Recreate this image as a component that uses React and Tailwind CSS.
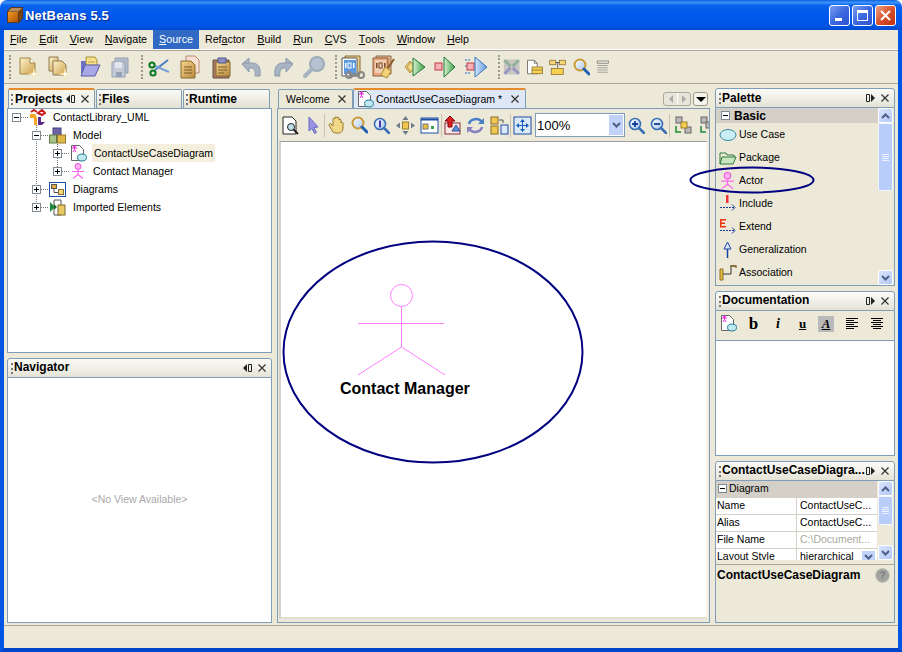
const blue = "border-[#7f9db9]";

const Svg = ({ s = 24, w, h, v, children }) => (
  <svg width={w || s} height={h || s} viewBox={v || `0 0 ${w || s} ${h || s}`} className="block shrink-0">{children}</svg>
);

function Defs() {
  return (
    <svg className="absolute w-0 h-0">
      <defs>
        <linearGradient id="gold" x1="0" y1="0" x2="1" y2="1"><stop offset="0" stopColor="#fdf3cf" /><stop offset="1" stopColor="#cf9f45" /></linearGradient>
        <linearGradient id="tan" x1="0" y1="0" x2="1" y2="1"><stop offset="0" stopColor="#f4d58e" /><stop offset="1" stopColor="#b98a3c" /></linearGradient>
        <linearGradient id="green" x1="0" y1="0" x2="1" y2="0"><stop offset="0" stopColor="#d6f0cf" /><stop offset="1" stopColor="#3e9e4a" /></linearGradient>
        <linearGradient id="bluetri" x1="0" y1="0" x2="1" y2="0"><stop offset="0" stopColor="#d5e6fa" /><stop offset="1" stopColor="#5f9ade" /></linearGradient>
        <linearGradient id="cube" x1="0" y1="0" x2="1" y2="1"><stop offset="0" stopColor="#f59b1d" /><stop offset="1" stopColor="#a84f08" /></linearGradient>
        <linearGradient id="lupe" x1="0" y1="0" x2="1" y2="1"><stop offset="0" stopColor="#ffffff" /><stop offset="1" stopColor="#a9c8ee" /></linearGradient>
      </defs>
    </svg>
  );
}

// toolbar icons
const Sparkle = ({ x, y }) => (
  <g transform={`translate(${x} ${y})`}>
    <path d="M0-6 1-1 6 0 1 1 0 6-1 1-6 0-1-1Z" fill="#fff" stroke="#f3dc8f" strokeWidth=".5" />
  </g>
);
const NewFile = () => <Svg><path d="M5 3h10l5 5v11H5Z" fill="url(#gold)" stroke="#a38443" /><path d="M15 3v5h5" fill="#fff" stroke="#a38443" /><Sparkle x={19} y={19} /></Svg>;
const NewProject = () => <Svg><path d="M3 2h9v14H3Z" fill="url(#gold)" stroke="#8f7a4e" /><path d="M7 6h9l4 4v10H7Z" fill="url(#gold)" stroke="#8f7a4e" /><Sparkle x={19} y={19} /></Svg>;
const OpenFolder = () => <Svg><path d="M4 6h5l1 2v10H4Z" fill="#6c71c4" /><path d="M9 2h9l2 3v11H9Z" fill="#f6e08c" stroke="#a98d3d" /><path d="M11 7h7M11 10h7" stroke="#c4a34c" /><path d="M4 21 8 10h15l-5 11Z" fill="#a9a8e6" stroke="#5b5aa8" /></Svg>;
const SaveAll = () => <Svg><path d="M7 3h13v15H7Z" fill="#b4bccb" stroke="#94a0b3" /><path d="M4 7h13v15H4Z" fill="#c4cad6" stroke="#94a0b3" /><path d="M7 7h7v6H7Z" fill="#e3e6ec" /><path d="M8 17h6v5H8Z" fill="#94a0b3" /></Svg>;
const Cut = () => <Svg><path d="M8 15 21 5" stroke="#4a7fc4" strokeWidth="2" /><path d="M8 11 22 17" stroke="#7aa3d8" strokeWidth="2" /><circle cx="5" cy="10" r="2.6" fill="none" stroke="#0c7a22" strokeWidth="2" /><circle cx="6" cy="18" r="2.6" fill="none" stroke="#0c7a22" strokeWidth="2" /></Svg>;
const Copy = () => <Svg><path d="M8 1h9l4 4v13H8Z" fill="#f9dfd0" stroke="#b58d76" /><path d="M3 6h10l4 4v13H3Z" fill="url(#tan)" stroke="#8a6a2d" /><path d="M6 12h8M6 15h8M6 18h8" stroke="#7a5c24" /></Svg>;
const Paste = () => <Svg><path d="M4 5h16v18H4Z" fill="#a97d6a" stroke="#6d4a3c" /><path d="M7 7h14v14H7Z" fill="url(#tan)" stroke="#8a6a2d" /><path d="M9 3h8v5H9Z" fill="#8c8fc5" stroke="#55578f" /><path d="M9 12h9M9 15h9M9 18h6" stroke="#7a5c24" /></Svg>;
const Undo = () => <Svg><path d="M3 8h9c6 0 9 4 8 13h-5c1-5-1-8-4-8H9v4L2 9l7-6v5" fill="#a8b4c4" stroke="#8f9bab" /></Svg>;
const Redo = () => <Svg><path d="M21 8h-9c-6 0-9 4-8 13h5c-1-5 1-8 4-8h2v4l7-8-7-6v5" fill="#a8b4c4" stroke="#8f9bab" /></Svg>;
const GrayLupe = () => <Svg><circle cx="15" cy="9" r="7" fill="#b7c2d0" stroke="#9fabb9" strokeWidth="2" /><path d="M10 14 3 21" stroke="#a7b2c0" strokeWidth="4" strokeLinecap="round" /></Svg>;
const Ones = ({ x, y, c }) => <g fill={c}><rect x={x} y={y} width="1.5" height="5" /><rect x={x + 3} y={y} width="3" height="5" fill="none" stroke={c} strokeWidth="1" /><rect x={x + 8} y={y} width="1.5" height="5" /></g>;
const Build = () => <Svg s={26}><path d="M5 2h15v18H5Z" fill="#e8cf94" stroke="#8a6a2d" /><path d="M2 4h15v18H2Z" fill="#fff" stroke="#555" /><rect x="4" y="6" width="12" height="14" fill="#5b9ae0" /><Ones x={5} y={9} c="#fff" /><path d="M9 21h11" stroke="#888" strokeWidth="3" /><circle cx="9" cy="21" r="3" fill="none" stroke="#888" strokeWidth="2" /><circle cx="21" cy="21" r="3" fill="none" stroke="#888" strokeWidth="2" /></Svg>;
const Clean = () => <Svg s={26}><path d="M5 2h15v18H5Z" fill="#e6b48d" stroke="#8a6a4d" /><path d="M2 4h15v18H2Z" fill="#e9a87e" stroke="#8b5a3a" /><rect x="4" y="6" width="11" height="13" fill="#eecdb3" /><Ones x={5} y={9} c="#7a4a2a" /><path d="M23 5 17 14" stroke="#8a5a2a" strokeWidth="2" /><path d="M14 13 20 17 16 24 10 21Z" fill="#f3d37a" stroke="#b08a35" /></Svg>;
const RunMain = () => <Svg><path d="M7 6 2 12 7 18 12 12Z" fill="#f4dc8d" stroke="#b48f3c" /><path d="M10 3 22 12 10 21Z" fill="url(#green)" stroke="#1f7a34" /><path d="M8 7 4 12 8 17" fill="none" stroke="#b48f3c" /></Svg>;
const DebugMain = () => <Svg><rect x="1" y="8" width="7" height="7" fill="#f7b0b5" stroke="#c03a46" /><path d="M10 2 21 12 10 22Z" fill="url(#green)" stroke="#1f7a34" /></Svg>;
const Profile = () => <Svg><path d="M0 5h6M0 11h2M0 18h6" stroke="#2b6cc8" strokeDasharray="2 1" /><rect x="2" y="8" width="7" height="7" fill="#f7b0b5" stroke="#c03a46" /><path d="M10 2 22 12 10 22Z" fill="url(#bluetri)" stroke="#3a75c0" /></Svg>;
const GrayArrows = () => <Svg s={18} v="0 0 24 24"><rect x="1" y="2" width="21" height="20" fill="#c8c6c0" /><path d="M2 3l8 8M21 3l-8 8" stroke="#8fb09a" strokeWidth="4" /><path d="M2 21l8-8M21 21l-8-8" stroke="#9a97c6" strokeWidth="4" /></Svg>;
const DocDb = () => <Svg s={18} v="0 0 24 24"><path d="M2 3h9l4 4v14H2Z" fill="#fff" stroke="#555" /><path d="M11 3v4h4" fill="none" stroke="#555" /><rect x="8" y="12" width="14" height="9" fill="#f5cf4d" stroke="#8a6a2d" /><path d="M8 16h14" stroke="#8a6a2d" /></Svg>;
const TreeDb = () => <Svg s={18} v="0 0 24 24"><rect x="1" y="3" width="8" height="6" fill="#f5d875" stroke="#8a6a2d" /><rect x="14" y="3" width="8" height="6" fill="#f5d875" stroke="#8a6a2d" /><path d="M9 6h5M11.500 6v7" stroke="#333" /><rect x="3" y="14" width="16" height="8" fill="#f5cf4d" stroke="#8a6a2d" /></Svg>;
const Lupe = ({ inner, c = "#3b6fb5" }) => <Svg s={17}><circle cx="7" cy="7" r="5.5" fill="url(#lupe)" stroke={c} strokeWidth="1.6" />{inner}<path d="M11 11 16 16" stroke={c} strokeWidth="2.6" strokeLinecap="round" /></Svg>;
const FindIcon = () => <Svg s={18}><circle cx="8" cy="7" r="5.500" fill="url(#lupe)" stroke="#c99a35" strokeWidth="2" /><path d="M12 11 17 16" stroke="#1f5fae" strokeWidth="3" strokeLinecap="round" /></Svg>;
const GrayList = () => <Svg s={18} v="0 0 24 24"><rect x="3" y="4" width="15" height="3" fill="none" stroke="#777" /><path d="M3 10h14M3 13h14M3 16h14M3 19h14" stroke="#a5a5a0" strokeWidth="1.5" /></Svg>;

function Grip() {
  return <div className="w-[2px] h-[24px] shrink-0 border-l-2 border-dotted border-[#9a9a90]" />;
}
function Btn({ w = "w-[31px]", children }) {
  return <div className={`${w} shrink-0 flex items-center justify-center`}>{children}</div>;
}

function TitleBtn({ red, children }) {
  return (
    <div className={`w-[21px] h-[21px] rounded-[3px] border border-white flex items-center justify-center ${red ? "bg-[linear-gradient(135deg,#e9a48a,#d9532c_50%,#b92d10)]" : "bg-[linear-gradient(135deg,#7b9ef0,#3c69e2_50%,#2c52cf)]"}`}>
      {children}
    </div>
  );
}

function TitleBar() {
  return (
    <div className="h-[30px] shrink-0 rounded-t-[7px] flex items-center pl-[6px] pr-[6px] bg-[linear-gradient(180deg,#0a5fe0_0%,#3d94f7_8%,#0a62ee_18%,#0058ee_50%,#0055e5_85%,#0049cf_100%)]">
      <svg width="18" height="18" viewBox="0 0 18 18" className="shrink-0">
        <path d="M1 5 5 1h12v11l-4 5H1Z" fill="#5c3a1a" />
        <path d="M2 6h10v10H2Z" fill="url(#cube)" />
        <path d="M2 5.500 5.500 2H16l-3.500 3.500Z" fill="#b98a5a" />
        <path d="M13 6l3-3v9l-3 3Z" fill="#7a4410" />
      </svg>
      <span className="ml-[1px] text-white font-bold text-[13px] tracking-[0.2px] [text-shadow:1px_1px_1px_#0a2a8a]">NetBeans 5.5</span>
      <div className="ml-auto flex gap-[2px]">
        <TitleBtn><div className="w-[7px] h-[3px] bg-white mt-[8px] mr-[3px]" /></TitleBtn>
        <TitleBtn><div className="w-[11px] h-[11px] border border-white border-t-[3px]" /></TitleBtn>
        <TitleBtn red><svg width="11" height="11" viewBox="0 0 11 11"><path d="M1 1l9 9M10 1l-9 9" stroke="#fff" strokeWidth="2" /></svg></TitleBtn>
      </div>
    </div>
  );
}

const menus = [
  ["", "F", "ile"], ["", "E", "dit"], ["", "V", "iew"], ["", "N", "avigate"], ["", "S", "ource"], ["Ref", "a", "ctor"],
  ["", "B", "uild"], ["", "R", "un"], ["", "C", "VS"], ["", "T", "ools"], ["", "W", "indow"], ["", "H", "elp"],
];

function MenuBar() {
  return (
    <div className="h-[21px] shrink-0 flex text-[10.7px] border-b border-[#aca899] shadow-[inset_0_-1px_0_#fff] pb-[2px]">
      {menus.map(([a, u, b], i) => (
        <div key={i} className={`h-[19px] px-[6px] flex items-center ${b === "ource" ? "bg-[#316ac5] text-white" : ""}`}>
          {a}<span className="underline">{u}</span>{b}
        </div>
      ))}
    </div>
  );
}

function Toolbar() {
  return (
    <div className="h-[33px] shrink-0 flex items-center pl-[5px] border-b border-[#aca899] pb-[1px]">
      <Grip />
      <Btn><NewFile /></Btn><Btn><NewProject /></Btn><Btn><OpenFolder /></Btn><Btn><SaveAll /></Btn>
      <div className="w-[6px]" /><Grip />
      <Btn><Cut /></Btn><Btn><Copy /></Btn><Btn><Paste /></Btn><Btn><Undo /></Btn><Btn><Redo /></Btn><Btn><GrayLupe /></Btn>
      <div className="w-[6px]" /><Grip />
      <Btn><Build /></Btn><Btn><Clean /></Btn><Btn><RunMain /></Btn><Btn><DebugMain /></Btn><Btn><Profile /></Btn>
      <div className="w-[6px]" /><Grip />
      <Btn w="w-[23px]"><GrayArrows /></Btn><Btn w="w-[23px]"><DocDb /></Btn><Btn w="w-[23px]"><TreeDb /></Btn><Btn w="w-[23px]"><FindIcon /></Btn><Btn w="w-[23px]"><GrayList /></Btn>
    </div>
  );
}

const Close = () => <svg width="8" height="8" viewBox="0 0 8 8" className="shrink-0"><path d="M.5.500l7 7M7.500.500l-7 7" stroke="#333" strokeWidth="1.200" /></svg>;
const PinL = () => <svg width="10" height="8" viewBox="0 0 10 8" className="shrink-0"><path d="M4 0v8L0 4Z" fill="#222" /><path d="M5.500.500h3v7h-3Z" fill="none" stroke="#222" /></svg>;
const PinR = () => <svg width="10" height="8" viewBox="0 0 10 8" className="shrink-0"><path d="M.5.500h3v7h-3Z" fill="none" stroke="#222" /><path d="M5 0v8l4-4Z" fill="#222" /></svg>;
const Dots = () => <div className="w-[2px] h-[11px] shrink-0 border-l-2 border-dotted border-[#777]" />;

function ViewHeader({ title, pin = <PinL />, pb = "pb-[2px]" }) {
  return (
    <div className={`h-[20px] shrink-0 flex items-center pl-[3px] pr-[5px] border rounded-t-[3px] ${blue} bg-[linear-gradient(180deg,#fbfaf6,#ecebe2_70%,#e4e2d4)]`}>
      <Dots />
      <span className={`ml-[1px] ${pb} font-bold text-[12px] truncate flex-1`}>{title}</span>
      <div className="flex items-center gap-[5px]">{pin}<Close /></div>
    </div>
  );
}

function Expander({ open }) {
  return (
    <svg width="9" height="9" viewBox="0 0 9 9" className="shrink-0 relative">
      <rect x=".5" y=".5" width="8" height="8" fill="#fff" stroke="#7f8a94" />
      <path d={open ? "M2 4.500h5" : "M2 4.500h5M4.500 2v5"} stroke="#000" />
    </svg>
  );
}

const ActorSmall = ({ s = 16 }) => (
  <svg width={s} height={s} viewBox="0 0 16 16" className="shrink-0">
    <circle cx="8" cy="3.500" r="3" fill="#ffb3f5" stroke="#f050e0" />
    <path d="M8 6.500v5M2 8.500h12M8 11.500 3 15.500M8 11.500l5 4" stroke="#ff66f0" strokeWidth="1.200" fill="none" />
  </svg>
);
const DiagramIcon = () => (
  <svg width="17" height="17" viewBox="0 0 17 17" className="shrink-0">
    <path d="M1.500.500h8l4 4v11h-12Z" fill="#fff" stroke="#666" />
    <path d="M4.500 1.500v3M2 3h5M4.500 4.500 3 7M4.500 4.500 6 7" stroke="#ee22dd" />
    <circle cx="4.500" cy="1.800" r="1.200" fill="#ee22dd" />
    <ellipse cx="12" cy="12.500" rx="4.500" ry="3.500" fill="#bfe8f0" stroke="#2a7f9a" />
  </svg>
);
const ModelRoot = () => (
  <svg width="17" height="17" viewBox="0 0 17 17" className="shrink-0">
    <path d="M1 5h5l2 4v7H5V9H1Z" fill="#f5a623" />
    <path d="M9 4l4-3 3 3-3 2Z" fill="none" stroke="#c81e1e" strokeWidth="2" />
    <path d="M9 8v8h4l3-3H12V8Z" fill="#5b2a86" />
    <path d="M2 3l3-2 3 2" fill="none" stroke="#c81e1e" strokeWidth="2" />
  </svg>
);
const ModelIcon = () => (
  <svg width="17" height="17" viewBox="0 0 17 17" className="shrink-0">
    <rect x="4" y="1" width="8" height="8" fill="#6d62a8" stroke="#46407a" />
    <rect x="0.500" y="8" width="7" height="8" fill="#a8c48a" stroke="#5f7a48" />
    <rect x="8.500" y="8" width="8" height="8" fill="#e0b848" stroke="#94782a" />
  </svg>
);
const DiagramsIcon = () => (
  <svg width="17" height="17" viewBox="0 0 17 17" className="shrink-0">
    <rect x=".5" y="1.500" width="16" height="14" fill="#fff" stroke="#1c4fa5" />
    <rect x="2.500" y="3.500" width="5" height="4" fill="#e8a838" stroke="#555" />
    <rect x="9.500" y="8.500" width="5" height="5" fill="#f3d977" stroke="#8a6a2d" />
    <path d="M5 7.500v4h4" stroke="#555" fill="none" />
  </svg>
);
const ImportedIcon = () => (
  <svg width="17" height="17" viewBox="0 0 17 17" className="shrink-0">
    <path d="M5 1h7v15H5Z" fill="#fff" stroke="#555" />
    <path d="M1 3l5 5-5 5Z" fill="#1c8a3a" />
    <path d="M5 5l3 3-3 3Z" fill="#166a2c" />
    <rect x="9" y="6" width="7" height="10" fill="#e8c860" stroke="#7a6a2a" />
  </svg>
);

function TreeRow({ depth, open, icon, label, selected }) {
  const indent = ["pl-[4px]", "pl-[24px]", "pl-[45px]"][depth];
  return (
    <div className={`h-[18px] flex items-center ${indent}`}>
      <Expander open={open} />
      <div className="w-[7px] border-t border-dotted border-[#777] mr-[1px]" />
      {icon}
      <span className={`ml-[5px] px-[2px] h-[18px] flex items-center ${selected ? "bg-[#f3efdc]" : ""}`}>{label}</span>
    </div>
  );
}

function ProjectsPanel() {
  return (
    <div className="h-[265px] shrink-0 flex flex-col">
      <div className="h-[20px] shrink-0 flex items-end pl-[1px] gap-[1px]">
        <div className={`w-[87px] h-[20px] flex items-center pl-[2px] pr-[5px] rounded-t-[2px] border-x border-t-2 border-t-[#e68b2c] ${blue} bg-[#f4f3ec]`}>
          <Dots /><span className="ml-[2px] font-bold text-[12px] flex-1">Projects</span><div className="flex items-center gap-[5px]"><PinL /><Close /></div>
        </div>
        <div className={`w-[86px] h-[19px] flex items-center pl-[2px] rounded-t-[2px] border-x border-t ${blue} bg-[linear-gradient(180deg,#fbfaf6,#e2e0d2)]`}><Dots /><span className="ml-[1px] font-bold text-[12px]">Files</span></div>
        <div className={`w-[87px] h-[19px] flex items-center pl-[2px] rounded-t-[2px] border-x border-t ${blue} bg-[linear-gradient(180deg,#fbfaf6,#e2e0d2)]`}><Dots /><span className="ml-[1px] font-bold text-[12px]">Runtime</span></div>
      </div>
      <div className={`relative flex-1 bg-white border ${blue}`}>
        <svg className="absolute left-0 top-0" width="60" height="110">
          <path d="M28.500 14V99M49.500 33V63" stroke="#777" strokeDasharray="1 1" fill="none" />
        </svg>
        <div className="relative mt-[-1px]">
          <TreeRow depth={0} open icon={<ModelRoot />} label="ContactLibrary_UML" />
          <TreeRow depth={1} open icon={<ModelIcon />} label="Model" />
          <TreeRow depth={2} icon={<DiagramIcon />} label="ContactUseCaseDiagram" selected />
          <TreeRow depth={2} icon={<ActorSmall />} label="Contact Manager" />
          <TreeRow depth={1} icon={<DiagramsIcon />} label="Diagrams" />
          <TreeRow depth={1} icon={<ImportedIcon />} label="Imported Elements" />
        </div>
      </div>
    </div>
  );
}

function NavigatorPanel() {
  return (
    <div className="flex-1 flex flex-col min-h-0">
      <ViewHeader title="Navigator" />
      <div className={`flex-1 bg-white border border-t-0 pb-[2px] ${blue} flex items-center justify-center text-[#a9a9a9]`}>
        &lt;No View Available&gt;
      </div>
    </div>
  );
}

// diagram toolbar icons
const PageLupe = () => <Svg s={19}><path d="M2 1h9l4 4v13H2Z" fill="#fff" stroke="#222" /><circle cx="10" cy="11" r="3.500" fill="#bfe0ea" stroke="#222" /><path d="M12.500 13.500 17 18" stroke="#222" strokeWidth="2" /></Svg>;
const Pointer = () => <Svg s={18}><path d="M5 1l9 10-4 .5 2.500 5-2 1-2.500-5L5 15Z" fill="#9a96e6" stroke="#6a66c0" /></Svg>;
const Hand = () => <Svg s={20}><path d="M6 17 2 10c0-1 1-2 2-1l2 2V4c0-1 2-1 2 0V2.500c0-1 2-1 2 0V3c0-1 2-1 2 0v2c0-1 2-1 2 0v3c0-1 2-1 2 0v5c0 3-2 5-4 5H9c-1 0-2-.5-3-1Z" fill="#f4d88a" stroke="#9a7a2c" /></Svg>;
const Move = () => <Svg s={19}><rect x="6.500" y="6" width="6" height="7" fill="#f0c850" stroke="#9a7a2c" /><path d="M9.500 0 12.500 4h-6ZM9.500 19 6.500 15h6ZM0 9.500 4 6.500v6ZM19 9.500 15 12.500v-6Z" fill="#707a88" /></Svg>;
const WinIcon = () => <Svg s={19}><rect x="1" y="2" width="17" height="15" fill="#fff" stroke="#1c4fa5" /><path d="M1 3.500h17" stroke="#1c4fa5" strokeWidth="2" /><rect x="3" y="8" width="5" height="5" fill="#e8c040" stroke="#777" /><rect x="11" y="10" width="3" height="3" fill="#3aa050" /></Svg>;
const UpDoc = () => <Svg s={19}><rect x="2" y="7" width="15" height="11" fill="#fbe9e4" stroke="#8a2a3a" /><path d="M7 0 12 5H9v6H5V5H2Z" fill="#d22" stroke="#801" /><path d="M13 9l4 6h-8Z" fill="#6090d8" stroke="#304f9a" /></Svg>;
const Refresh = () => <Svg s={19}><path d="M3 8c1-5 9-7 13-2" fill="none" stroke="#4a80c8" strokeWidth="2.500" /><path d="M16 11c-1 5-9 7-13 2" fill="none" stroke="#8880c0" strokeWidth="2.500" /><path d="M18 2v6h-6Z" fill="#4a80c8" /><path d="M1 17v-6h6Z" fill="#8880c0" /></Svg>;
const Boxes = () => <Svg s={19}><rect x="1" y="1" width="7" height="7" fill="#f0c850" stroke="#8a6a2d" /><rect x="1" y="10" width="7" height="8" fill="#f0c850" stroke="#8a6a2d" /><rect x="11" y="9" width="7" height="9" fill="#dce8fb" stroke="#1c4fa5" /><path d="M9 4h4v3" stroke="#555" fill="none" /></Svg>;
const FitAll = () => <Svg s={19}><rect x="1" y="1" width="17" height="17" fill="#dceaf8" stroke="#1c4fa5" /><path d="M9.500 3 12 6H7ZM9.500 16 7 13h5ZM3 9.500 6 7v5ZM16 9.500 13 12V7Z" fill="#1c5fc0" /><path d="M9.500 5v9M5 9.500h9" stroke="#1c5fc0" /></Svg>;
const Squares = ({ flip }) => <Svg s={19}><rect x="2" y="1" width="6" height="6" fill="#b8b8b8" stroke="#666" /><rect x="11" y="11" width="6" height="6" fill="#b8b8b8" stroke="#666" /><rect x="7" y="6" width="6" height="6" fill={flip ? "#b8b8b8" : "#f4d050"} stroke={flip ? "#666" : "#9a7a2c"} /><path d="M2 10v6h5" stroke="#1c8a3a" strokeWidth="1.500" fill="none" /></Svg>;
const Sep = () => <div className="w-px h-[23px] bg-[#c5c2b0] shrink-0" />;

function EditorTabs() {
  return (
    <div className="h-[20px] shrink-0 flex items-end pl-[1px]">
      <div className={`w-[75px] h-[19px] flex items-center pl-[7px] pr-[6px] rounded-t-[2px] border-x border-t ${blue} bg-[#ece9d8]`}>
        <span className="flex-1">Welcome</span><Close />
      </div>
      <div className={`w-[173px] h-[20px] flex items-center pl-[3px] pr-[6px] rounded-t-[2px] border-x border-t-2 border-t-[#e68b2c] ${blue} bg-[#dee7f5]`}>
        <DiagramIcon /><span className="ml-[2px] flex-1">ContactUseCaseDiagram *</span><Close />
      </div>
      <div className="ml-auto flex items-center gap-[2px] pb-[2px] pr-[2px]">
        <div className="w-[28px] h-[14px] rounded-[3px] border border-[#a9a89c] bg-[#e8e6da] flex items-center justify-center gap-[4px]">
          <div className="w-0 h-0 border-y-[4px] border-y-transparent border-r-[4px] border-r-[#aaa]" />
          <div className="w-px h-[12px] bg-white" />
          <div className="w-0 h-0 border-y-[4px] border-y-transparent border-l-[4px] border-l-[#aaa]" />
        </div>
        <div className="w-[15px] h-[14px] rounded-[3px] border border-[#9a998c] bg-[#f4f3ec] flex items-center justify-center">
          <div className="w-0 h-0 border-x-[5px] border-x-transparent border-t-[5px] border-t-black" />
        </div>
      </div>
    </div>
  );
}

function Editor() {
  return (
    <div className="w-[433px] shrink-0 flex flex-col">
      <EditorTabs />
      <div className={`flex-1 flex flex-col border ${blue} min-h-0`}>
        <div className="h-[32px] shrink-0 flex items-center overflow-hidden">
          <Btn w="w-[24px]"><PageLupe /></Btn><Btn w="w-[22px]"><Pointer /></Btn><Sep />
          <Btn w="w-[24px]"><Hand /></Btn><Btn w="w-[20px]"><FindIcon /></Btn>
          <Btn w="w-[24px]"><Lupe inner={<path d="M7 3.500v7" stroke="#4a3ab0" strokeWidth="2" />} /></Btn>
          <Btn w="w-[24px]"><Move /></Btn><Btn w="w-[24px]"><WinIcon /></Btn><Sep />
          <Btn w="w-[20px]"><UpDoc /></Btn><Btn w="w-[26px]"><Refresh /></Btn><Btn w="w-[22px]"><Boxes /></Btn><Sep />
          <Btn w="w-[22px]"><FitAll /></Btn>
          <div className={`ml-[2px] w-[90px] h-[24px] shrink-0 bg-white border ${blue} flex items-center pl-[1px] text-[13px]`}>
            <span className="flex-1">100%</span>
            <div className="w-[16px] h-[22px] bg-[#c1d3fb] border border-white flex items-center justify-center">
              <svg width="9" height="6" viewBox="0 0 9 6"><path d="M1 1l3.500 3.500L8 1" stroke="#4d6185" strokeWidth="2" fill="none" /></svg>
            </div>
          </div>
          <Btn w="w-[22px]"><Lupe inner={<path d="M4 7h6M7 4v6" stroke="#123f9a" strokeWidth="1.800" />} /></Btn>
          <Btn w="w-[22px]"><Lupe inner={<path d="M4 7h6" stroke="#123f9a" strokeWidth="1.800" />} /></Btn>
          <Sep />
          <Btn w="w-[27px]"><Squares /></Btn><Btn w="w-[22px]"><Squares flip /></Btn>
        </div>
        <div className="flex-1 mx-px mb-[3px] relative bg-white border-t border-l-2 border-r-2 border-b-2 border-t-[#9d9da1] border-l-[#d4d0c8] border-r-[#f4f3ec] border-b-[#e0dfd0] overflow-hidden">
          <svg className="absolute left-0 top-0" width="430" height="478" viewBox="281 142 430 478">
            <ellipse cx="433" cy="352" rx="149.500" ry="110.500" fill="none" stroke="#000080" strokeWidth="2" />
            <g stroke="#ff80ff" fill="none">
              <circle cx="401.500" cy="295.500" r="11" />
              <path d="M401.500 306.500V347M358 323.500H444M401.500 347 358 375M401.500 347 445 375" />
            </g>
          </svg>
          <span className="absolute left-[59px] top-[237px] font-bold text-[16px] leading-[20px] text-black whitespace-nowrap">Contact Manager</span>
        </div>
      </div>
    </div>
  );
}

function ScrollBtn({ down }) {
  return (
    <div className="h-[15px] w-[15px] shrink-0 rounded-[2px] border border-white bg-[linear-gradient(135deg,#dbe5fd,#b3c8f8)] flex items-center justify-center">
      <svg width="9" height="6" viewBox="0 0 9 6"><path d={down ? "M1 1l3.500 3.500L8 1" : "M1 5l3.500-3.500L8 5"} stroke="#4d6185" strokeWidth="2" fill="none" /></svg>
    </div>
  );
}
function Thumb({ h }) {
  return (
    <div className={`${h} w-[15px] shrink-0 rounded-[2px] border border-[#f4f6fd] bg-[#b9cdfa] flex flex-col items-center justify-center gap-px`}>
      <div className="w-[7px] h-px bg-[#eef3fe]" /><div className="w-[7px] h-px bg-[#eef3fe]" /><div className="w-[7px] h-px bg-[#eef3fe]" /><div className="w-[7px] h-px bg-[#eef3fe]" />
    </div>
  );
}

const UseCaseIco = () => <Svg w={18} h={14}><ellipse cx="9" cy="7" rx="8" ry="5.500" fill="#c8eef3" stroke="#3a8a9e" /></Svg>;
const PackageIco = () => <Svg w={18} h={14}><path d="M1 13V2h6l1 2h7v2" fill="none" stroke="#2c7a3a" /><path d="M1 13 3 6h14l-3 7Z" fill="#c8e6c0" stroke="#2c7a3a" /></Svg>;
const IncludeIco = () => <svg width="18" height="18" viewBox="0 0 18 18" className="shrink-0"><path d="M7 0h2.500v8H7Z" fill="#e33" /><path d="M1 12.500h14" stroke="#1c3fa5" strokeDasharray="2 1" /><path d="M13 9.500l3 3-3 3" fill="none" stroke="#1c3fa5" /></svg>;
const ExtendIco = () => <svg width="18" height="18" viewBox="0 0 18 18" className="shrink-0"><path d="M1 1h6v1.500H2.500v2H6V6H2.500v2H7v1.500H1Z" fill="#ee3311" /><path d="M1 12.500h14" stroke="#1c3fa5" strokeDasharray="2 1" /><path d="M13 9.500l3 3-3 3" fill="none" stroke="#1c3fa5" /></svg>;
const GeneralIco = () => <svg width="18" height="18" viewBox="0 0 18 18" className="shrink-0"><path d="M8.500 1 5 8h7Z" fill="#dcebfa" stroke="#1c3fa5" /><path d="M8.500 8v9" stroke="#1c3fa5" strokeWidth="1.500" /></svg>;
const AssocIco = () => <svg width="18" height="18" viewBox="0 0 18 18" className="shrink-0"><path d="M1 5v11h3V5Z" fill="#e8c040" stroke="#8a6a2d" /><path d="M4 10h8V2h5" fill="none" stroke="#333" /><path d="M11 2h6v2" fill="none" stroke="#8a6a2d" strokeWidth="1.500" /></svg>;

const paletteItems = [
  [<UseCaseIco />, "Use Case"], [<PackageIco />, "Package"], [<ActorSmall s={17} />, "Actor"], [<IncludeIco />, "Include"],
  [<ExtendIco />, "Extend"], [<GeneralIco />, "Generalization"], [<AssocIco />, "Association"],
];

function Palette() {
  return (
    <div className="relative h-[198px] shrink-0 flex flex-col">
      <ViewHeader title="Palette" pin={<PinR />} pb="pb-0" />
      <div className={`flex-1 flex border border-t-0 ${blue} min-h-0`}>
        <div className="flex-1 min-w-0 overflow-hidden">
          <div className="h-[15px] bg-[#d4d0c8] flex items-center pl-[5px] font-bold text-[12px]">
            <Expander open /><span className="ml-[4px]">Basic</span>
          </div>
          {paletteItems.map(([icon, label], i) => (
            <div key={i} className="h-[23px] flex items-center pl-[3px]">
              <div className="w-[20px] flex justify-start">{icon}</div>
              <span>{label}</span>
            </div>
          ))}
        </div>
        <div className="w-[15px] mr-px shrink-0 flex flex-col">
          <ScrollBtn /><Thumb h="h-[68px]" /><div className="flex-1" /><ScrollBtn down />
        </div>
      </div>
      <svg className="absolute left-[-27px] top-[77px] pointer-events-none" width="130" height="30">
        <ellipse cx="64" cy="15" rx="61.500" ry="12.500" fill="none" stroke="#000080" strokeWidth="2" />
      </svg>
    </div>
  );
}

function Documentation() {
  return (
    <div className="h-[165px] shrink-0 flex flex-col">
      <ViewHeader title="Documentation" pin={<PinR />} />
      <div className={`flex-1 flex flex-col border border-t-0 ${blue}`}>
        <div className="h-[29px] shrink-0 flex items-center pl-[4px] pb-[4px] font-['Liberation_Serif',serif] text-black">
          <div className="w-[16px] mr-[5px]"><DiagramIcon /></div>
          <div className="w-[25px] text-center font-bold text-[17px]">b</div>
          <div className="w-[24px] text-center italic font-bold text-[14px]">i</div>
          <div className="w-[25px] text-center font-bold text-[13px] underline">u</div>
          <div className="w-[16px] h-[16px] ml-[3px] mr-[5px] bg-[#b9b9b9] text-center italic font-bold text-[13px] leading-[16px] underline">A</div>
          <svg width="12" height="11" viewBox="0 0 12 11" className="ml-[7px]"><path d="M0 .5h12M0 2.500h8M0 4.500h12M0 6.500h8M0 8.500h12M0 10.500h8" stroke="#000" /></svg>
          <svg width="12" height="11" viewBox="0 0 12 11" className="ml-[13px]"><path d="M0 .5h12M2 2.500h8M0 4.500h12M2 6.500h8M0 8.500h12M2 10.500h8" stroke="#000" /></svg>
        </div>
        <div className={`flex-1 bg-white border-t ${blue} mr-0`} />
      </div>
    </div>
  );
}

const propRows = [
  ["Name", <span className="truncate">ContactUseC...</span>],
  ["Alias", <span className="truncate">ContactUseC...</span>],
  ["File Name", <span className="truncate text-[#a9a9a0]">C:\Document...</span>],
  ["Layout Style", <><span className="flex-1">hierarchical</span><div className="w-[15px] h-[14px] bg-[#c1d3fb] border border-white flex items-center justify-center mr-[1px]"><svg width="9" height="6" viewBox="0 0 9 6"><path d="M1 1l3.500 3.500L8 1" stroke="#4d6185" strokeWidth="2" fill="none" /></svg></div></>],
];

function Properties() {
  return (
    <div className="flex-1 flex flex-col min-h-0">
      <ViewHeader title="ContactUseCaseDiagra..." pin={<PinR />} />
      <div className={`flex-1 flex flex-col border border-t-0 ${blue} min-h-0`}>
        <div className="h-[79px] shrink-0 flex overflow-hidden">
          <div className="flex-1 min-w-0">
            <div className="h-[17px] bg-[#d4d0c8] flex items-center pl-[2px] pb-[2px]"><Expander open /><span className="ml-[2px]">Diagram</span></div>
            {propRows.map(([k, v]) => (
              <div key={k} className="h-[17px] flex bg-white border-b border-[#d4d0c8] items-center">
                <div className="w-[81px] shrink-0 pl-[1px] pb-[1px] h-full flex items-center border-r border-[#d4d0c8]">{k}</div>
                <div className="flex-1 min-w-0 pl-[3px] pb-[1px] h-full flex items-center">{v}</div>
              </div>
            ))}
          </div>
          <div className="w-[15px] mx-px shrink-0 flex flex-col">
            <ScrollBtn /><Thumb h="h-[29px]" /><div className="flex-1" /><ScrollBtn down />
          </div>
        </div>
        <div className="mt-[4px] border-t border-[#aca899] flex-1 flex items-start pt-[1px] pl-[1px] pr-[4px]">
          <span className="font-bold text-[12px] flex-1 leading-[18px]">ContactUseCaseDiagram</span>
          <div className="w-[15px] h-[15px] mt-[2px] rounded-full bg-[#a3a3a0] border border-[#c9c8bc] flex items-center justify-center text-[10px] text-[#808080] font-bold">?</div>
        </div>
      </div>
    </div>
  );
}

export default function App() {
  return (
    <div className="w-[902px] h-[652px] flex flex-col bg-white overflow-hidden text-[10.5px] leading-none text-black font-['Liberation_Sans',sans-serif]">
      <Defs />
      <TitleBar />
      <div className="flex-1 min-h-0 flex flex-col bg-[#ece9d8] border-x-4 border-b-4 border-x-[#0055e5] border-b-[#0046c8]">
        <MenuBar />
        <Toolbar />
        <div className="flex-1 min-h-0 flex gap-[5px] pt-[4px] pb-[2px] pl-[3px] pr-[3px]">
          <div className="w-[265px] shrink-0 flex flex-col gap-[5px]">
            <ProjectsPanel />
            <NavigatorPanel />
          </div>
          <Editor />
          <div className="w-[180px] shrink-0 flex flex-col gap-[5px]">
            <Palette />
            <Documentation />
            <Properties />
          </div>
        </div>
        <div className="h-[23px] shrink-0 border-t border-[#aca899]" />
      </div>
    </div>
  );
}
